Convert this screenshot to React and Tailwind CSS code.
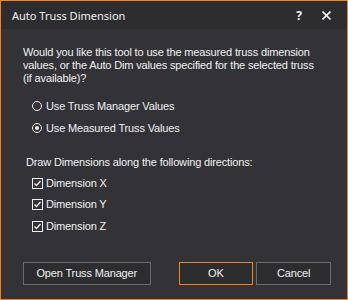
import { useState } from 'react';

const Radio = ({ checked, label, onClick }) => (
  <button onClick={onClick} className="flex items-center h-[16px] text-left">
    <span className="w-[10px] h-[10px] rounded-full border border-[#f1f1f1] flex items-center justify-center mr-[4px]">
      {checked && <span className="w-[4px] h-[4px] rounded-full bg-[#f1f1f1]" />}
    </span>
    <span>{label}</span>
  </button>
);

const Check = ({ checked, label, onClick }) => (
  <button onClick={onClick} className="flex items-center h-[16px] text-left">
    <span className="w-[11px] h-[11px] border border-[#f1f1f1] flex items-center justify-center mr-[3px]">
      {checked && (
        <svg width="9" height="9" viewBox="0 0 9 9">
          <path d="M1.5 4.5 L3.5 6.5 L7.5 2" fill="none" stroke="#f1f1f1" strokeWidth="1.3" />
        </svg>
      )}
    </span>
    <span>{label}</span>
  </button>
);

export default function App() {
  const [mode, setMode] = useState('measured');
  const [dims, setDims] = useState({ X: true, Y: true, Z: true });

  return (
    <div className="w-[348px] h-[300px] border border-[#f3841a] bg-[#333337] flex flex-col text-[#f1f1f1] font-['Liberation_Sans',Arial,sans-serif] text-[11px] leading-[13px] tracking-[-0.15px]">
      <div className="h-[28px] bg-[#2d2d30] flex items-center pl-[11px] pr-[16px] font-['Noto_Sans',sans-serif] text-[11px] tracking-normal">
        <span className="flex-1">Auto Truss Dimension</span>
        <span className="font-bold text-[12px] mr-[20px]">?</span>
        <svg width="9" height="9" viewBox="0 0 9 9">
          <path d="M0.5 0.5 L8.5 8.5 M8.5 0.5 L0.5 8.5" stroke="#f1f1f1" strokeWidth="1.6" />
        </svg>
      </div>

      <div className="flex-1 flex flex-col pl-[22px] pr-[16px]">
        <p className="mt-[17px]">
          Would you like this tool to use the measured truss dimension
          <br />
          values, or the Auto Dim values specified for the selected truss
          <br />
          (if available)?
        </p>

        <div className="flex flex-col gap-[6px] mt-[13px] pl-[9px]">
          <Radio checked={mode === 'manager'} label="Use Truss Manager Values" onClick={() => setMode('manager')} />
          <Radio checked={mode === 'measured'} label="Use Measured Truss Values" onClick={() => setMode('measured')} />
        </div>

        <p className="mt-[20px] pl-[3px]">Draw Dimensions along the following directions:</p>

        <div className="flex flex-col gap-[5.5px] mt-[6px] pl-[9px]">
          {['X', 'Y', 'Z'].map(k => (
            <Check
              key={k}
              checked={dims[k]}
              label={`Dimension ${k}`}
              onClick={() => setDims({ ...dims, [k]: !dims[k] })}
            />
          ))}
        </div>

        <div className="flex mt-auto mb-[14px]">
          <button className="w-[128px] h-[23px] border border-[#6b6b6b] bg-[#2d2d30]">Open Truss Manager</button>
          <button className="w-[75px] h-[23px] border border-[#f3841a] bg-[#2d2d30] ml-[28px]">OK</button>
          <button className="w-[75px] h-[23px] border border-[#6b6b6b] bg-[#2d2d30] ml-[3px]">Cancel</button>
        </div>
      </div>
    </div>
  );
}
